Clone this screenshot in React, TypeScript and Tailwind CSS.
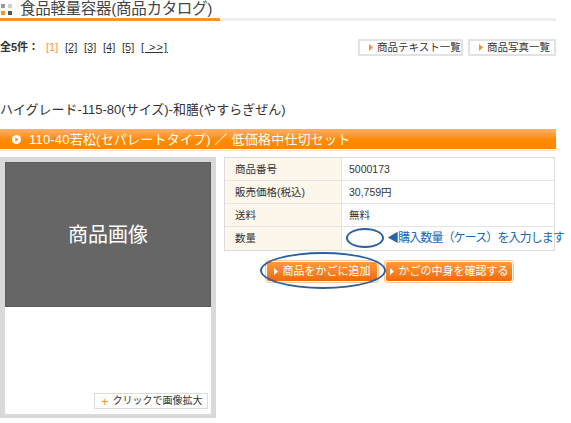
const pages = ['[2]', '[3]', '[4]', '[5]'];

const rows = [
  { label: '商品番号', value: '5000173' },
  { label: '販売価格(税込)', value: '30,759円' },
  { label: '送料', value: '無料' },
];

function Tri({ className }: { className: string }) {
  return (
    <svg width="4" height="7" viewBox="0 0 4 7" className={className}>
      <path d="M0 0 L4 3.5 L0 7 Z" fill="currentColor" />
    </svg>
  );
}

function SubButton({ label, width }: { label: string; width: string }) {
  return (
    <div
      className={`${width} h-[17px] border-2 border-[#e2e2e2] bg-white flex items-center pl-[9px] gap-[4px] text-[10.5px] leading-none text-[#333]`}
    >
      <Tri className="text-[#f7931e]" />
      {label}
    </div>
  );
}

function CartButton({ label, width }: { label: string; width: string }) {
  return (
    <div className="p-px border border-[#f2c9a6] rounded-[3px] bg-[#fff6ee]">
      <div
        className={`${width} h-[19px] rounded-[2px] bg-gradient-to-b from-[#ff9a3a] to-[#f06a00] flex items-center justify-center gap-[5px] text-white text-[11px] leading-none`}
      >
        <Tri className="text-white" />
        {label}
      </div>
    </div>
  );
}

export default function App() {
  return (
    <div className="w-[571px] h-[423px] overflow-hidden bg-white text-[#333] font-['Liberation_Sans','Noto_Sans_CJK_JP',sans-serif]">
      <div className="w-[556px]">
        {/* Header */}
        <div className="h-[18px] flex items-center pl-px gap-[8px]">
          <div className="grid grid-cols-2 gap-[3px] w-[11px] mt-[1px]">
            <span className="w-[4px] h-[4px] bg-[#9a9a9a]" />
            <span className="w-[4px] h-[4px] bg-[#cfcfcf]" />
            <span className="w-[4px] h-[4px] bg-[#f7931e]" />
            <span className="w-[4px] h-[4px] bg-[#555]" />
          </div>
          <h1 className="text-[15.5px] leading-[16px] text-[#444] tracking-[-0.3px]">
            食品軽量容器(商品カタログ)
          </h1>
        </div>
        <div className="flex h-[3px]">
          <div className="w-[220px] bg-[#f7931e]" />
          <div className="flex-1 bg-[#eeeeee]" />
        </div>

        {/* Pagination */}
        <div className="mt-[18px] h-[17px] flex items-center">
          <div className="flex items-center text-[11px] leading-none">
            <span className="w-[46px] font-bold">全5件：</span>
            <span className="w-[19px] text-[#f7931e]">[1]</span>
            {pages.map((p) => (
              <span key={p} className="w-[19px] underline">
                {p}
              </span>
            ))}
            <span className="underline tracking-[1px]">[ &gt;&gt;]</span>
          </div>
          <div className="ml-auto flex gap-[5px]">
            <SubButton label="商品テキスト一覧" width="w-[105px]" />
            <SubButton label="商品写真一覧" width="w-[88px]" />
          </div>
        </div>

        {/* Product name */}
        <h2 className="mt-[47px] text-[13px] leading-[14px] text-[#333]">
          ハイグレード-115-80(サイズ)-和膳(やすらぎぜん)
        </h2>

        {/* Orange bar */}
        <div className="mt-[12px] h-[20px] bg-gradient-to-b from-[#ffb160] via-[#ff8c00] to-[#fb8600] flex items-center pl-[12px] gap-[8px] text-white text-[13px] leading-none">
          <svg width="9" height="9" viewBox="0 0 9 9">
            <circle cx="4.5" cy="4.5" r="4.5" fill="#fff" />
            <path d="M3.4 2.4 L6.2 4.5 L3.4 6.6 Z" fill="#f38100" />
          </svg>
          <span className="tracking-[0.2px]">110-40若松(セパレートタイプ) ／ 低価格中仕切セット</span>
        </div>
        <div className="mt-px h-px bg-[#fde6c8]" />

        {/* Body */}
        <div className="mt-[6px] flex">
          <div className="w-[216px] h-[261px] bg-[#d9d9d9] p-[5px] pb-[4px] flex flex-col">
            <div className="h-[145px] bg-[#666] border border-[#5b5b5b] flex items-center justify-center text-white text-[20px] leading-none">
              商品画像
            </div>
            <div className="flex-1 bg-white flex items-end justify-end pr-[3px] pb-[5px]">
              <div className="h-[16px] w-[114px] border border-[#dcdcdc] bg-white flex items-center pl-[6px] gap-[4px] text-[10px] leading-none whitespace-nowrap">
                <span className="text-[#f7931e] text-[13px] leading-none">+</span>
                クリックで画像拡大
              </div>
            </div>
          </div>

          <div className="ml-[8px] w-[331px]">
            <div className="border border-[#dcdcdc] text-[10.5px] leading-none">
              {rows.map((r) => (
                <div key={r.label} className="flex h-[23px] border-b border-[#e4e4e4]">
                  <div className="w-[117px] bg-[#fdf6ea] border-r border-[#e4e4e4] flex items-center pl-[10px]">
                    {r.label}
                  </div>
                  <div className="flex-1 flex items-center pl-[7px]">{r.value}</div>
                </div>
              ))}
              <div className="flex h-[23px]">
                <div className="w-[117px] bg-[#fdf6ea] border-r border-[#e4e4e4] flex items-center pl-[10px]">
                  数量
                </div>
                <div className="flex-1 relative">
                  <div className="absolute left-[4px] top-[1px] w-[38px] h-[20px] rounded-[50%] border-2 border-[#2e5f9e]" />
                  <div className="absolute left-[45px] top-[5px] whitespace-nowrap text-[#2166b0] text-[12px] leading-none tracking-[-0.9px]">
                    ◀購入数量（ケース）を入力します
                  </div>
                </div>
              </div>
            </div>

            <div className="mt-[9px] flex justify-center gap-[5px] relative">
              <CartButton label="商品をかごに追加" width="w-[110px]" />
              <CartButton label="かごの中身を確認する" width="w-[126px]" />
              <div className="absolute left-[36px] top-[-8px] w-[126px] h-[37px] rounded-[50%] border-2 border-[#2e5f9e]" />
            </div>
          </div>
        </div>
      </div>
    </div>
  );
}
